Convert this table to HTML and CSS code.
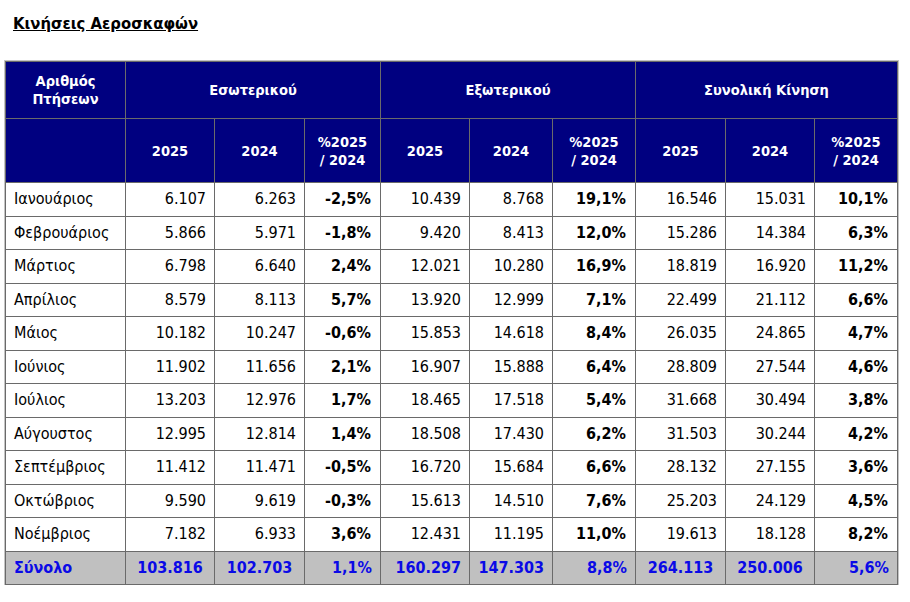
FILE: index.html
```html
<!DOCTYPE html>
<html lang="el">
<head>
<meta charset="utf-8">
<title>Κινήσεις Αεροσκαφών</title>
<link rel="stylesheet" href="styles.css">
</head>
<body>
<div class="page">
  <h1 class="title">Κινήσεις Αεροσκαφών</h1>
  <table class="stats">
    <colgroup>
      <col class="c-month">
      <col class="c-num"><col class="c-num2"><col class="c-pct1">
      <col class="c-num"><col class="c-num3"><col class="c-pct">
      <col class="c-num2"><col class="c-num"><col class="c-pct">
    </colgroup>
    <thead>
      <tr class="h1">
        <th>Αριθμός<br>Πτήσεων</th>
        <th colspan="3">Εσωτερικού</th>
        <th colspan="3">Εξωτερικού</th>
        <th colspan="3">Συνολική Κίνηση</th>
      </tr>
      <tr class="h2">
        <th></th>
        <th>2025</th><th>2024</th><th>%2025<br>/ 2024</th>
        <th>2025</th><th>2024</th><th>%2025<br>/ 2024</th>
        <th>2025</th><th>2024</th><th>%2025<br>/ 2024</th>
      </tr>
    </thead>
    <tbody>
      <tr><td class="m">Ιανουάριος</td><td>6.107</td><td>6.263</td><td class="p">-2,5%</td><td>10.439</td><td>8.768</td><td class="p">19,1%</td><td>16.546</td><td>15.031</td><td class="p">10,1%</td></tr>
      <tr><td class="m">Φεβρουάριος</td><td>5.866</td><td>5.971</td><td class="p">-1,8%</td><td>9.420</td><td>8.413</td><td class="p">12,0%</td><td>15.286</td><td>14.384</td><td class="p">6,3%</td></tr>
      <tr><td class="m">Μάρτιος</td><td>6.798</td><td>6.640</td><td class="p">2,4%</td><td>12.021</td><td>10.280</td><td class="p">16,9%</td><td>18.819</td><td>16.920</td><td class="p">11,2%</td></tr>
      <tr><td class="m">Απρίλιος</td><td>8.579</td><td>8.113</td><td class="p">5,7%</td><td>13.920</td><td>12.999</td><td class="p">7,1%</td><td>22.499</td><td>21.112</td><td class="p">6,6%</td></tr>
      <tr><td class="m">Μάιος</td><td>10.182</td><td>10.247</td><td class="p">-0,6%</td><td>15.853</td><td>14.618</td><td class="p">8,4%</td><td>26.035</td><td>24.865</td><td class="p">4,7%</td></tr>
      <tr><td class="m">Ιούνιος</td><td>11.902</td><td>11.656</td><td class="p">2,1%</td><td>16.907</td><td>15.888</td><td class="p">6,4%</td><td>28.809</td><td>27.544</td><td class="p">4,6%</td></tr>
      <tr><td class="m">Ιούλιος</td><td>13.203</td><td>12.976</td><td class="p">1,7%</td><td>18.465</td><td>17.518</td><td class="p">5,4%</td><td>31.668</td><td>30.494</td><td class="p">3,8%</td></tr>
      <tr><td class="m">Αύγουστος</td><td>12.995</td><td>12.814</td><td class="p">1,4%</td><td>18.508</td><td>17.430</td><td class="p">6,2%</td><td>31.503</td><td>30.244</td><td class="p">4,2%</td></tr>
      <tr><td class="m">Σεπτέμβριος</td><td>11.412</td><td>11.471</td><td class="p">-0,5%</td><td>16.720</td><td>15.684</td><td class="p">6,6%</td><td>28.132</td><td>27.155</td><td class="p">3,6%</td></tr>
      <tr><td class="m">Οκτώβριος</td><td>9.590</td><td>9.619</td><td class="p">-0,3%</td><td>15.613</td><td>14.510</td><td class="p">7,6%</td><td>25.203</td><td>24.129</td><td class="p">4,5%</td></tr>
      <tr><td class="m">Νοέμβριος</td><td>7.182</td><td>6.933</td><td class="p">3,6%</td><td>12.431</td><td>11.195</td><td class="p">11,0%</td><td>19.613</td><td>18.128</td><td class="p">8,2%</td></tr>
    </tbody>
    <tfoot>
      <tr class="total"><td class="m">Σύνολο</td><td class="c">103.816</td><td class="c">102.703</td><td>1,1%</td><td>160.297</td><td>147.303</td><td>8,8%</td><td class="c">264.113</td><td class="c">250.006</td><td>5,6%</td></tr>
    </tfoot>
  </table>
</div>
</body>
</html>
```

FILE: styles.css
```css
html, body {
  margin: 0;
  padding: 0;
  background: #ffffff;
}

body {
  font-family: "DejaVu Sans Condensed", "DejaVu Sans", sans-serif;
  font-stretch: condensed;
  color: #000000;
}

.page {
  padding: 0 0 0 5px;
}

.title {
  margin: 0 0 28px 0;
  padding: 14px 0 0 8px;
  font-size: 16.5px;
  line-height: 19px;
  font-weight: bold;
  text-decoration: underline;
  color: #000000;
}

.stats {
  border-collapse: collapse;
  table-layout: fixed;
  width: 893px;
  box-shadow: 0 0 0 1px #c4c4c4;
}

.c-month { width: 120px; }
.c-num { width: 89px; }
.c-num2 { width: 90px; }
.c-num3 { width: 83px; }
.c-pct1 { width: 76px; }
.c-pct { width: 83px; }

.stats th,
.stats td {
  border: 1px solid #6a6a6a;
  padding: 0 8px;
}

.stats th {
  background: #000080;
  color: #ffffff;
  font-size: 14.5px;
  font-weight: bold;
  text-align: center;
  line-height: 18px;
  padding: 0 4px;
}

.h1 th {
  height: 56px;
}

.h2 th {
  height: 63px;
}

.stats td {
  font-size: 16px;
  text-align: right;
  height: 32.5px;
  line-height: 20px;
}

.stats td.m {
  text-align: left;
  padding-left: 8px;
}

.stats td.p {
  font-weight: bold;
  padding-right: 9px;
}

.total td {
  background: #c0c0c0;
  color: #0a0ae6;
  font-weight: bold;
  height: 32px;
}

.total td.c {
  text-align: center;
  padding: 0 4px;
}
```
